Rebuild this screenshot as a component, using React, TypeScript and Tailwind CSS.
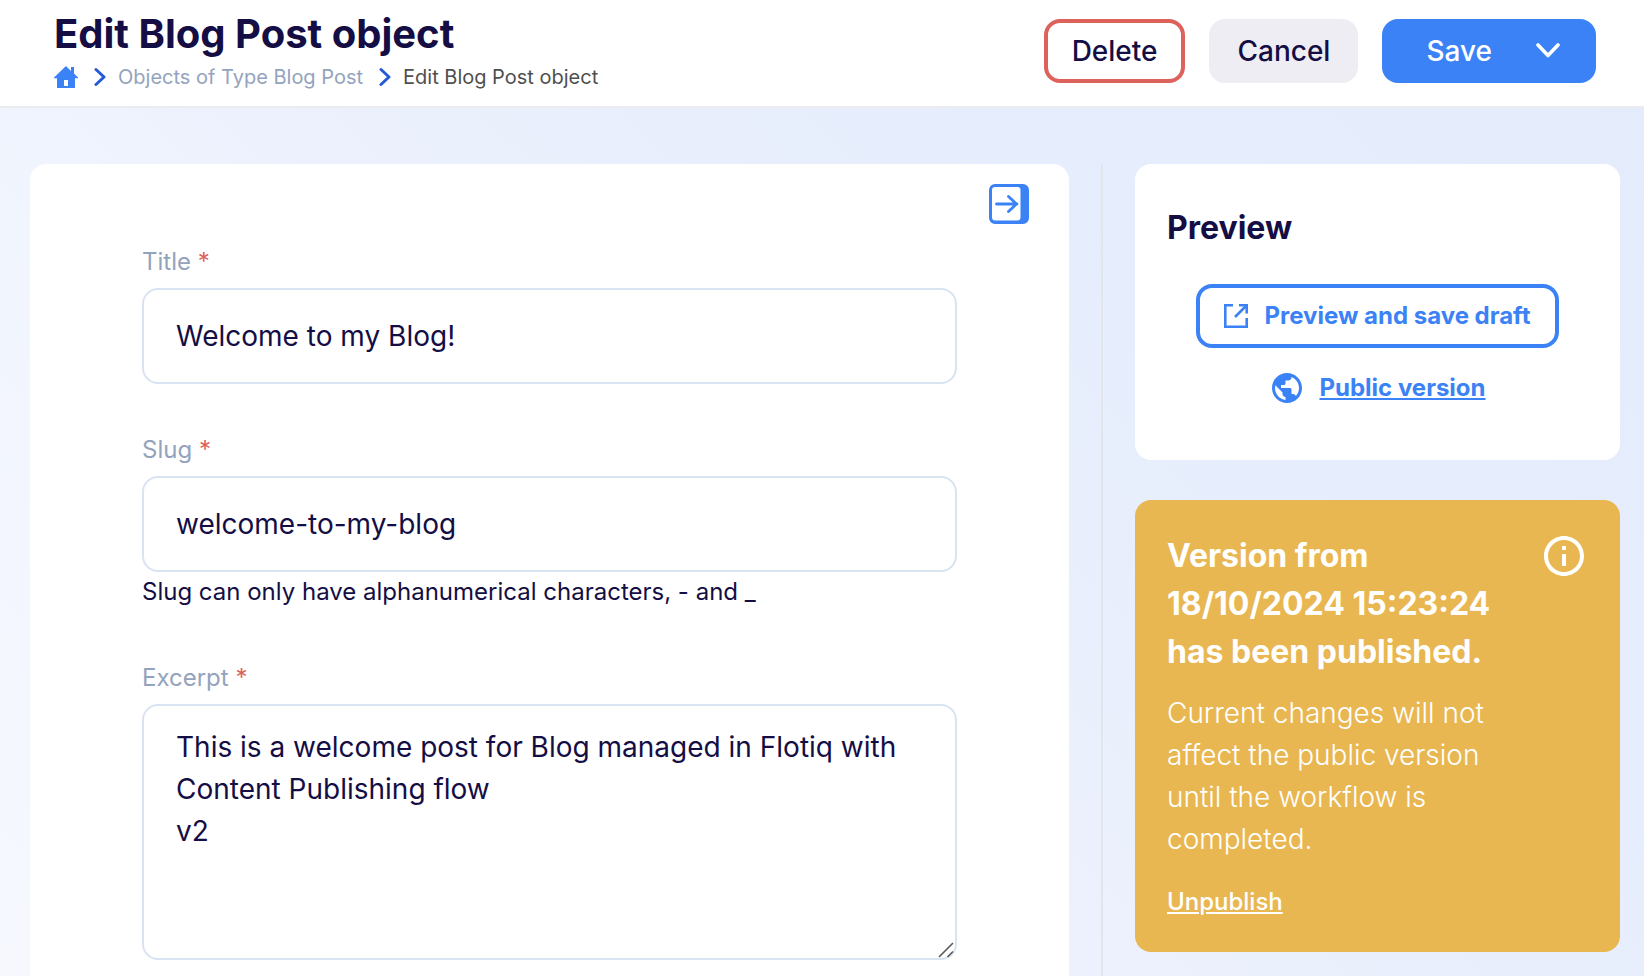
import React from "react";
import { MdInfoOutline, MdPublic } from "react-icons/md";

function HomeIcon() {
  return (
    <svg viewBox="0 0 24 24" className="size-6" fill="currentColor" aria-hidden="true">
      <path fillRule="evenodd" d="M12 1 L17 6 V2 H20 V8.6 L24 12.6 V13.2 H21 V23 H3 V13.2 H0 V12.6 Z M10 15 V21 H14 V15 Z" />
    </svg>
  );
}

function ChevronRight() {
  return (
    <svg viewBox="0 0 12 20" className="h-5 w-3 text-[#2459d9]" fill="none" stroke="currentColor" strokeWidth="3" strokeLinecap="round" strokeLinejoin="round" aria-hidden="true">
      <path d="M2 2.5 L10 10 L2 17.5" />
    </svg>
  );
}

function ChevronDown() {
  return (
    <svg viewBox="0 0 24 16" className="h-4 w-6" fill="none" stroke="currentColor" strokeWidth="3.6" strokeLinecap="round" strokeLinejoin="round" aria-hidden="true">
      <path d="M2 2 L12 12.5 L22 2" />
    </svg>
  );
}

function CollapseIcon() {
  return (
    <svg viewBox="0 0 40 40" className="size-10" aria-hidden="true">
      <path fill="currentColor" fillRule="evenodd" d="M6 0H34A6 6 0 0 1 40 6V34A6 6 0 0 1 34 40H6A6 6 0 0 1 0 34V6A6 6 0 0 1 6 0ZM6 3A3 3 0 0 0 3 6V34A3 3 0 0 0 6 36.5H28.5A3 3 0 0 0 31.5 34V6A3 3 0 0 0 28.5 3Z" />
      <path fill="none" stroke="currentColor" strokeWidth="2.8" strokeLinecap="round" strokeLinejoin="round" d="M7.5 20H28M19.5 12.5L27.5 20L19.5 27.5" />
    </svg>
  );
}

function OpenIcon() {
  return (
    <svg viewBox="0 0 24 24" className="size-6" fill="none" stroke="currentColor" strokeWidth="2.6" aria-hidden="true">
      <path d="M9 1.3H1.3V22.7H22.7V14" />
      <path d="M11 13L22 2" />
      <path d="M15 1.3H22.7V9.5" />
    </svg>
  );
}

const fieldBox =
  "block w-full rounded-2xl border-2 border-[#dae3f2] bg-white px-8 text-[28px] leading-[42px] text-[#140e45] outline-none";

function Field({ id, label, help, children }: { id: string; label: string; help?: string; children: React.ReactNode }) {
  return (
    <div>
      <label htmlFor={id} className="mb-2 block text-2xl leading-9 text-[#94a3bd]">
        {label} <span className="text-[#dd625c]">*</span>
      </label>
      {children}
      {help && <p className="my-1 text-2xl text-[#140e45]">{help}</p>}
    </div>
  );
}

export default function App() {
  return (
    <div className="flex min-h-screen flex-col bg-[linear-gradient(225deg,#e4ebfb_0%,#e6edfc_30%,#e9effc_45%,#edf1fd_58%,#f1f5fe_70%,#f6f8fe_100%)] font-['Inter',sans-serif] text-[#140e45]">
      <header className="flex items-start justify-between border-b-2 border-[#ececf0] bg-white pr-12 pl-[54px]">
        <div className="pt-2.5 pb-[15px]">
          <h1 className="text-[40px] leading-12 font-bold">Edit Blog Post object</h1>
          <nav aria-label="Breadcrumb" className="mt-[5px] flex items-center text-xl leading-7">
            <a href="#home" aria-label="Home" className="mr-4 text-[#3b82f6]"><HomeIcon /></a>
            <ChevronRight />
            <a href="#objects" className="mr-4 ml-3 text-[#94a3bd]">Objects of Type Blog Post</a>
            <ChevronRight />
            <span className="ml-3 text-[#4f4f4f]">Edit Blog Post object</span>
          </nav>
        </div>
        <div className="flex gap-6 pt-[19px] text-[28px] font-medium">
          <button type="button" className="h-16 rounded-2xl border-4 border-[#dd625c] px-6">Delete</button>
          <button type="button" className="h-16 rounded-2xl bg-[#eeedf3] px-7">Cancel</button>
          <button type="button" className="flex h-16 items-center gap-11 rounded-2xl bg-[#3b82f6] pr-9 pl-11 text-white">
            Save
            <ChevronDown />
          </button>
        </div>
      </header>

      <main className="flex flex-1 pt-14 pr-6 pl-[30px]">
        <section className="min-w-0 flex-1 rounded-t-2xl bg-white px-28 pt-5">
          <div className="-mr-18 flex justify-end">
            <button type="button" aria-label="Collapse sidebar" className="text-[#3b82f6]"><CollapseIcon /></button>
          </div>
          <form className="mt-5 flex flex-col gap-12">
            <Field id="title" label="Title">
              <input id="title" defaultValue="Welcome to my Blog!" className={`${fieldBox} h-24`} />
            </Field>
            <Field id="slug" label="Slug" help="Slug can only have alphanumerical characters, - and _">
              <input id="slug" defaultValue="welcome-to-my-blog" className={`${fieldBox} h-24`} />
            </Field>
            <Field id="excerpt" label="Excerpt">
              <div className="relative">
                <textarea
                  id="excerpt"
                  defaultValue={"This is a welcome post for Blog managed in Flotiq with Content Publishing flow\nv2"}
                  className={`${fieldBox} h-64 resize-none py-5`}
                />
                <svg viewBox="0 0 16 16" className="pointer-events-none absolute right-[3px] bottom-0.5 size-4 text-[#5a5a5a]" stroke="currentColor" strokeWidth="1.6" fill="none" aria-hidden="true">
                  <path d="M1 15L15 1M9.5 15L15 9.5" />
                </svg>
              </div>
            </Field>
          </form>
        </section>

        <div className="mx-8 w-0.5 bg-[#e3e5ec]" />

        <aside className="flex w-[485px] shrink-0 flex-col gap-10">
          <section className="rounded-2xl bg-white px-8 pt-10 pb-[54px]">
            <h2 className="text-[32px] leading-12 font-bold">Preview</h2>
            <div className="mt-8 flex flex-col items-center gap-[22px] text-2xl font-bold text-[#3b82f6]">
              <button type="button" className="flex h-16 items-center gap-4 rounded-2xl border-4 border-[#3b82f6] px-6">
                <OpenIcon />
                Preview and save draft
              </button>
              <a href="#public" className="flex items-center gap-3.5 leading-9">
                <MdPublic className="size-9" />
                <span className="underline">Public version</span>
              </a>
            </div>
          </section>

          <section className="rounded-2xl bg-[#e9b752] p-8 text-white">
            <div className="flex items-start justify-between">
              <div className="w-[340px]">
                <h2 className="text-[32px] leading-12 font-bold">Version from 18/10/2024 15:23:24 has been published.</h2>
                <p className="mt-4 text-[28px] leading-[42px] font-light">
                  Current changes will not affect the public version until the workflow is completed.
                </p>
              </div>
              <MdInfoOutline className="size-12" />
            </div>
            <button type="button" className="mt-6 block text-2xl leading-9 font-medium underline">Unpublish</button>
          </section>
        </aside>
      </main>
    </div>
  );
}
